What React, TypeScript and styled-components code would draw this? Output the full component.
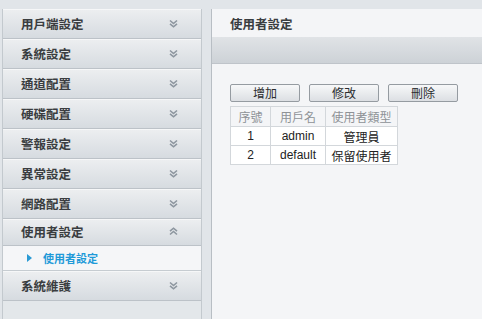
import React, { FC } from 'react';
import styled, { createGlobalStyle } from 'styled-components';

const GlobalStyle = createGlobalStyle`
  html, body {
    margin: 0;
    padding: 0;
    background: #e1e5e9;
    font-family: "Noto Sans CJK TC", "Liberation Sans", sans-serif;
  }
`;

const menu = ['用戶端設定', '系統設定', '通道配置', '硬碟配置', '警報設定', '異常設定', '網路配置'];

const users = [
  { id: 1, name: 'admin', type: '管理員' },
  { id: 2, name: 'default', type: '保留使用者' },
];

const Chevron: FC<{ up?: boolean }> = ({ up }) => (
  <svg width="9" height="9" viewBox="0 0 9 9" style={{ transform: up ? 'rotate(180deg)' : undefined }}>
    <path d="M1 1.5 L4.5 4.5 L8 1.5" fill="none" stroke="#8d969f" strokeWidth="1.6" />
    <path d="M1 4.8 L4.5 7.8 L8 4.8" fill="none" stroke="#8d969f" strokeWidth="1.6" />
  </svg>
);

const App: FC = () => {
  return (
    <>
      <GlobalStyle />
      <Page>
        <Sidebar>
          {menu.map((m) => (
            <MenuItem key={m}>
              <MenuLabel>{m}</MenuLabel>
              <Chevron />
            </MenuItem>
          ))}
          <MenuItem open>
            <MenuLabel>使用者設定</MenuLabel>
            <Chevron up />
          </MenuItem>
          <SubItem>
            <Triangle />
            <SubLabel>使用者設定</SubLabel>
          </SubItem>
          <MenuItem>
            <MenuLabel>系統維護</MenuLabel>
            <Chevron />
          </MenuItem>
        </Sidebar>
        <Main>
          <Title>使用者設定</Title>
          <Toolbar />
          <Content>
            <Buttons>
              <Button>增加</Button>
              <Button>修改</Button>
              <Button>刪除</Button>
            </Buttons>
            <Table>
              <thead>
                <tr>
                  <Th w={39}>序號</Th>
                  <Th w={54}>用戶名</Th>
                  <Th w={71}>使用者類型</Th>
                </tr>
              </thead>
              <tbody>
                {users.map((u) => (
                  <tr key={u.id}>
                    <Td>{u.id}</Td>
                    <Td>{u.name}</Td>
                    <Td>{u.type}</Td>
                  </tr>
                ))}
              </tbody>
            </Table>
          </Content>
        </Main>
      </Page>
    </>
  );
};

const Page = styled.div`
  display: flex;
  height: 319px;
  padding-top: 9px;
  box-sizing: border-box;
  overflow: hidden;
`;

const Sidebar = styled.div`
  width: 198px;
  margin-left: 2px;
  border-left: 1px solid #c3c9ce;
  border-right: 1px solid #c3c9ce;
  background: #e3e7ea;
  flex-shrink: 0;
`;

const MenuItem = styled.div<{ open?: boolean }>`
  display: flex;
  align-items: center;
  justify-content: space-between;
  height: ${({ open }) => (open ? 23 : 26)}px;
  padding: 0 23px 2px 18px;
  border-top: 1px solid #f6f7f8;
  border-bottom: 1px solid #bcc2c8;
  background: linear-gradient(to bottom, #eceef0 0%, #d6dbe0 100%);
`;

const MenuLabel = styled.span`
  font-size: 12.5px;
  font-weight: 700;
  color: #3a3d40;
`;

const SubItem = styled.div`
  display: flex;
  align-items: center;
  height: 24px;
  padding-left: 24px;
  background: #f5f6f8;
  border-bottom: 1px solid #c6ccd1;
`;

const Triangle = styled.span`
  width: 0;
  height: 0;
  border-top: 4px solid transparent;
  border-bottom: 4px solid transparent;
  border-left: 5px solid #2a9ad4;
  margin-right: 11px;
`;

const SubLabel = styled.span`
  font-size: 11px;
  font-weight: 700;
  color: #1f9ad8;
`;

const Main = styled.div`
  flex: 1;
  margin-left: 9px;
  border-left: 1px solid #b8bec4;
  background: #f4f5f7;
  display: flex;
  flex-direction: column;
`;

const Title = styled.div`
  height: 28px;
  display: flex;
  align-items: center;
  padding-left: 18px;
  font-size: 12.5px;
  font-weight: 700;
  color: #3a3d40;
`;

const Toolbar = styled.div`
  height: 26px;
  background: linear-gradient(to bottom, #e0e3e6 0%, #cdd2d7 100%);
  border-bottom: 1px solid #bfc4ca;
`;

const Content = styled.div`
  padding: 20px 0 0 18px;
`;

const Buttons = styled.div`
  display: flex;
  gap: 9px;
  margin-bottom: 4px;
`;

const Button = styled.button`
  width: 70px;
  height: 18px;
  padding: 0;
  border: 1px solid #959ba1;
  border-radius: 2px;
  background: linear-gradient(to bottom, #f7f8f9 0%, #dcdfe3 100%);
  font-family: "Noto Sans CJK TC", "Liberation Sans", sans-serif;
  font-size: 12px;
  line-height: 16px;
  color: #2b2d2f;
`;

const Table = styled.table`
  border-collapse: collapse;
  font-size: 12px;
  font-family: "Liberation Sans", "Noto Sans CJK TC", sans-serif;
`;

const Th = styled.th<{ w: number }>`
  width: ${({ w }) => w}px;
  height: 19px;
  padding: 0;
  border: 1px solid #d3d7db;
  font-weight: 400;
  color: #8e9296;
  text-align: center;
`;

const Td = styled.td`
  height: 18px;
  padding: 0;
  border: 1px solid #d3d7db;
  background: #ffffff;
  color: #222;
  text-align: center;
`;

export default App;
